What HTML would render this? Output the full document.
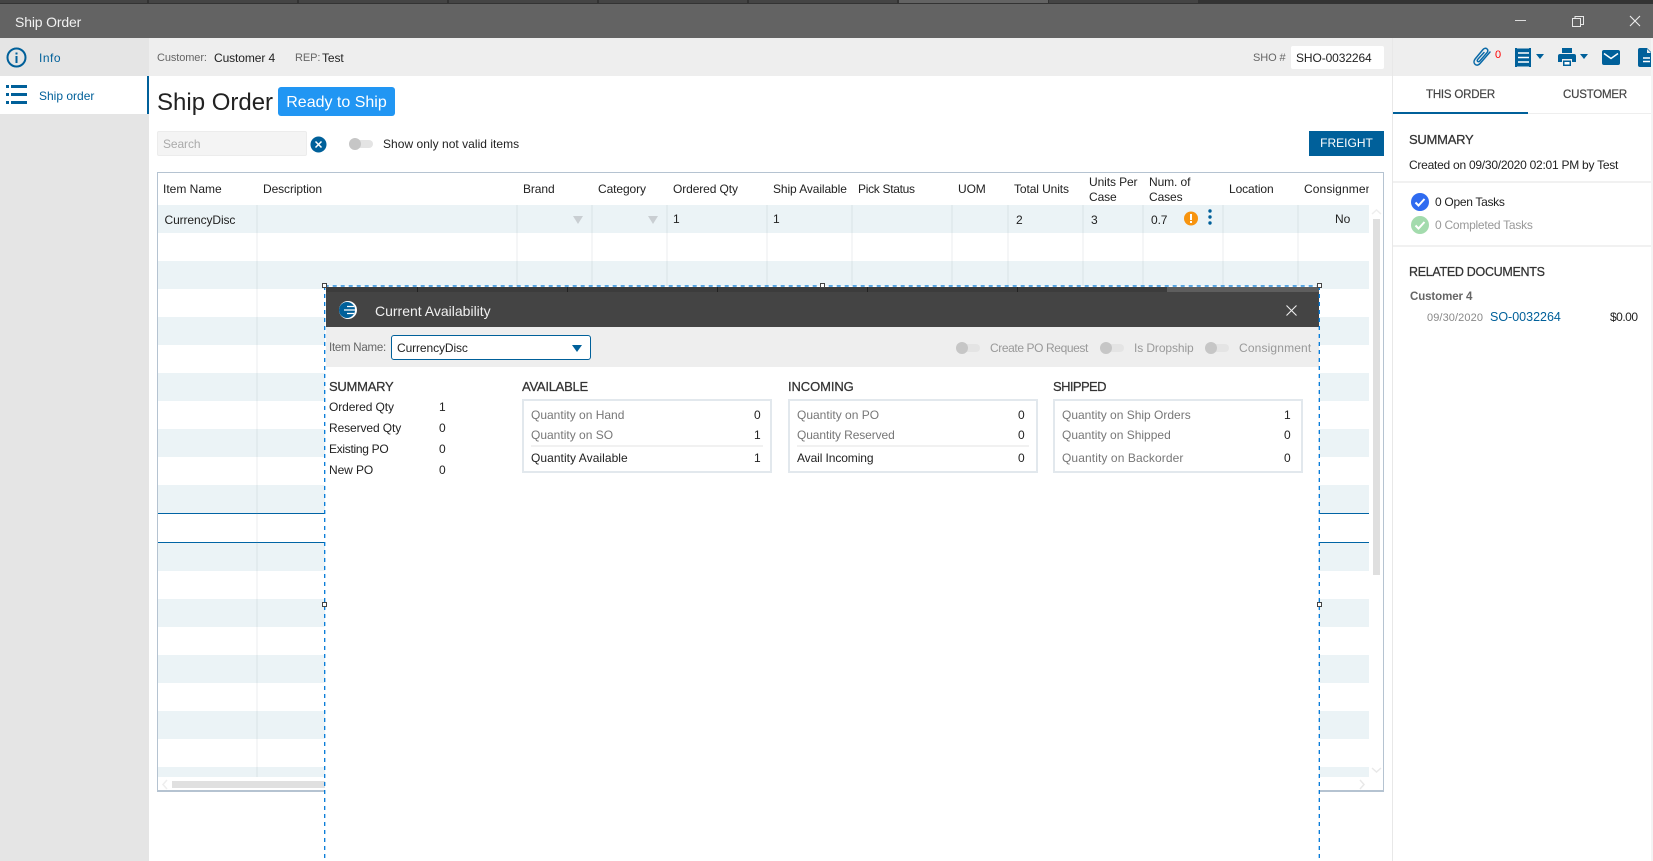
<!DOCTYPE html>
<html lang="en"><head><meta charset="utf-8"><title>Ship Order</title>
<style>
*{box-sizing:border-box}
html,body{margin:0;padding:0;width:1653px;height:861px;overflow:hidden;background:#fff}
body{position:relative;font-family:"Liberation Sans",sans-serif;font-size:12px;color:#222}
.a{position:absolute}
.t{position:absolute;white-space:nowrap;line-height:16px;height:16px;letter-spacing:-.1px}
.g{color:#777;letter-spacing:0}
.sep{position:absolute;top:205px;width:2px;height:572px;background:rgba(130,140,150,.08)}
.tg{position:absolute;width:24px;height:8px;border-radius:4px;background:#e4e4e4}
.tg:before{content:"";position:absolute;left:0;top:-2px;width:12px;height:12px;border-radius:50%;background:#c6c6c6}
.box{position:absolute;top:399px;width:250px;height:74px;border:2px solid #e2e8ed;background:#fff}
.hd{font-size:13px;color:#333;letter-spacing:-.25px;-webkit-text-stroke:.25px #333}
.div{position:absolute;height:2px;background:#f1f1f1}
.h{position:absolute;width:5px;height:5px;border:1px solid #444;background:#fff}
</style></head><body>

<!-- top strip -->
<div class="a" style="left:0;top:0;width:1653px;height:4px;background:#333"></div>
<div class="a" style="left:0;top:0;width:147px;height:3px;background:#444"></div>
<div class="a" style="left:149px;top:0;width:148px;height:3px;background:#444"></div>
<div class="a" style="left:299px;top:0;width:148px;height:3px;background:#444"></div>
<div class="a" style="left:449px;top:0;width:148px;height:3px;background:#444"></div>
<div class="a" style="left:599px;top:0;width:148px;height:3px;background:#444"></div>
<div class="a" style="left:749px;top:0;width:148px;height:3px;background:#444"></div>
<div class="a" style="left:899px;top:0;width:149px;height:3px;background:#636363"></div>
<div class="a" style="left:1049px;top:0;width:149px;height:3px;background:#444"></div>
<!-- title bar -->
<div class="a" style="left:0;top:4px;width:1653px;height:34px;background:#636363"></div>
<div class="t" style="left:15px;top:14px;color:#f2f2f2;font-size:14px;letter-spacing:-.15px">Ship Order</div>
<div class="a" style="left:1515px;top:20px;width:11px;height:1px;background:#ddd"></div>
<svg class="a" style="left:1571px;top:15px" width="14" height="13" viewBox="0 0 14 13" fill="none" stroke="#e8e8e8"><rect x="1.500" y="3.500" width="8" height="8"/><path d="M4 3V1.500h8.500v8H10"/></svg>
<svg class="a" style="left:1629px;top:15px" width="12" height="12" viewBox="0 0 12 12" stroke="#eee" stroke-width="1.100"><path d="M1 1l10 10M11 1L1 11"/></svg>

<!-- sidebar -->
<div class="a" style="left:0;top:38px;width:149px;height:823px;background:#e5e5e5"></div>
<div class="a" style="left:0;top:76px;width:149px;height:38px;background:#fff;border-right:2px solid #00609a"></div>
<svg class="a" style="left:6px;top:47px" width="21" height="21" viewBox="0 0 21 21"><circle cx="10.500" cy="10.500" r="9" fill="none" stroke="#00609a" stroke-width="2"/><rect x="9.500" y="9" width="2" height="7" fill="#00609a"/><rect x="9.500" y="5.500" width="2" height="2" fill="#00609a"/></svg>
<div class="t" style="left:39px;top:50px;color:#00609a;letter-spacing:.5px">Info</div>
<svg class="a" style="left:6px;top:85px" width="21" height="20" viewBox="0 0 21 20" fill="#00609a"><rect x="0" y="0" width="3" height="3"/><rect x="5" y="0" width="16" height="3"/><rect x="0" y="8" width="3" height="3"/><rect x="5" y="8" width="16" height="3"/><rect x="0" y="16" width="3" height="3"/><rect x="5" y="16" width="16" height="3"/></svg>
<div class="t" style="left:39px;top:88px;color:#00609a;letter-spacing:0">Ship order</div>

<!-- header bar -->
<div class="a" style="left:149px;top:38px;width:1504px;height:38px;background:#eee"></div>
<div class="t" style="left:157px;top:50px;font-size:11px;color:#666">Customer:</div>
<div class="t" style="left:214px;top:50px">Customer 4</div>
<div class="t" style="left:295px;top:50px;font-size:11px;color:#666">REP:</div>
<div class="t" style="left:322px;top:50px">Test</div>
<div class="t" style="left:1253px;top:50px;font-size:11px;color:#666">SHO #</div>
<div class="a" style="left:1291px;top:46px;width:93px;height:23px;background:#fff;border-radius:2px"></div>
<div class="t" style="left:1296px;top:50px">SHO-0032264</div>

<!-- title -->
<div class="a" style="left:157px;top:87px;font-size:24px;line-height:32px;white-space:nowrap;color:#222">Ship Order</div>
<div class="a" style="left:278px;top:87px;width:117px;height:29px;background:#2196f3;border-radius:3px;color:#fff;font-size:16px;line-height:31px;text-align:center;white-space:nowrap">Ready to Ship</div>

<!-- search row -->
<div class="a" style="left:157px;top:131px;width:150px;height:25px;background:#f4f4f4;border:1px solid #ececec;border-radius:2px"></div>
<div class="t" style="left:163px;top:136px;color:#aaa">Search</div>
<svg class="a" style="left:310px;top:136px" width="17" height="17" viewBox="0 0 17 17"><circle cx="8.500" cy="8.500" r="8" fill="#00609a"/><path d="M5.500 5.500l6 6M11.500 5.500l-6 6" stroke="#fff" stroke-width="1.500"/></svg>
<div class="tg" style="left:349px;top:140px"></div>
<div class="t" style="left:383px;top:136px;letter-spacing:.03px">Show only not valid items</div>
<div class="a" style="left:1309px;top:131px;width:75px;height:25px;background:#00609a;color:#fff;font-size:12px;line-height:25px;text-align:center">FREIGHT</div>

<!-- table -->
<div class="a" style="left:157px;top:172px;width:1227px;height:620px;border:1px solid #b5c3d1;border-bottom-width:2px"></div>
<div class="a" style="left:158px;top:205px;width:1211px;height:308px;background:repeating-linear-gradient(#ebf3f6 0,#ebf3f6 28px,#fff 28px,#fff 56px)"></div>
<div class="a" style="left:158px;top:543px;width:1211px;height:234px;background:repeating-linear-gradient(#ebf3f6 0,#ebf3f6 28px,#fff 28px,#fff 56px)"></div>
<div class="a" style="left:158px;top:513px;width:1211px;height:1px;background:#0064a5"></div>
<div class="a" style="left:158px;top:542px;width:1211px;height:1px;background:#0064a5"></div>
<div class="sep" style="left:256px"></div><div class="sep" style="left:516px"></div><div class="sep" style="left:591px"></div><div class="sep" style="left:666px"></div><div class="sep" style="left:766px"></div><div class="sep" style="left:851px"></div><div class="sep" style="left:951px"></div><div class="sep" style="left:1007px"></div><div class="sep" style="left:1082px"></div><div class="sep" style="left:1142px"></div><div class="sep" style="left:1222px"></div><div class="sep" style="left:1297px"></div>

<div class="t" style="left:163px;top:181px;letter-spacing:0">Item Name</div>
<div class="t" style="left:263px;top:181px">Description</div>
<div class="t" style="left:523px;top:181px">Brand</div>
<div class="t" style="left:598px;top:181px">Category</div>
<div class="t" style="left:673px;top:181px">Ordered Qty</div>
<div class="t" style="left:773px;top:181px">Ship Available</div>
<div class="t" style="left:858px;top:181px;letter-spacing:-.3px">Pick Status</div>
<div class="t" style="left:958px;top:181px">UOM</div>
<div class="t" style="left:1014px;top:181px">Total Units</div>
<div class="t" style="left:1089px;top:174px">Units Per</div>
<div class="t" style="left:1089px;top:189px">Case</div>
<div class="t" style="left:1149px;top:174px">Num. of</div>
<div class="t" style="left:1149px;top:189px">Cases</div>
<div class="t" style="left:1229px;top:181px">Location</div>
<div class="t" style="left:1304px;top:181px;width:65px;overflow:hidden;letter-spacing:.1px">Consignment</div>

<div class="t" style="left:164.500px;top:212px">CurrencyDisc</div>
<div class="a" style="left:573px;top:216px;border-left:5.500px solid transparent;border-right:5.500px solid transparent;border-top:8px solid #c9ced2"></div>
<div class="a" style="left:648px;top:216px;border-left:5.500px solid transparent;border-right:5.500px solid transparent;border-top:8px solid #c9ced2"></div>
<div class="t" style="left:673px;top:211px">1</div>
<div class="t" style="left:773px;top:211px">1</div>
<div class="t" style="left:1016px;top:212px">2</div>
<div class="t" style="left:1091px;top:212px">3</div>
<div class="t" style="left:1151px;top:212px">0.7</div>
<svg class="a" style="left:1184px;top:211px" width="14" height="15" viewBox="0 0 14 15"><circle cx="7" cy="7.500" r="7" fill="#f7940f"/><rect x="6" y="3" width="2" height="6" fill="#fff"/><rect x="6" y="10" width="2" height="2" fill="#fff"/></svg>
<svg class="a" style="left:1208px;top:209px" width="4" height="16" fill="#00609a"><circle cx="2" cy="2" r="1.700"/><circle cx="2" cy="8" r="1.700"/><circle cx="2" cy="14" r="1.700"/></svg>
<div class="t" style="left:1335px;top:211px">No</div>

<!-- scrollbars -->
<div class="a" style="left:1373px;top:219px;width:7px;height:356px;background:#dfdfdf"></div>
<svg class="a" style="left:1370px;top:208px" width="13" height="8" fill="none" stroke="#eee" stroke-width="1.500"><path d="M2 6l4.500-4 4.500 4"/></svg>
<svg class="a" style="left:1370px;top:766px" width="13" height="8" fill="none" stroke="#e8e8e8" stroke-width="1.500"><path d="M2 2l4.500 4 4.500-4"/></svg>
<div class="a" style="left:172px;top:781px;width:160px;height:7px;background:#e0e0e0"></div>
<svg class="a" style="left:161px;top:778px" width="8" height="13" fill="none" stroke="#eee" stroke-width="1.500"><path d="M6 2L2 6.500 6 11"/></svg>
<svg class="a" style="left:1358px;top:778px" width="8" height="13" fill="none" stroke="#e8e8e8" stroke-width="1.500"><path d="M2 2l4 4.500L2 11"/></svg>

<!-- right panel -->
<div class="a" style="left:1392px;top:38px;width:1px;height:823px;background:#e8e8e8"></div>
<div class="a" style="left:1393px;top:38px;width:260px;height:823px;background:#fff"></div>
<div class="a" style="left:1393px;top:38px;width:260px;height:38px;background:#eee"></div>
<svg class="a" style="left:1472px;top:47px" width="20" height="21" viewBox="0 0 20 21" fill="none" stroke="#0a6aa8" stroke-width="1.500" stroke-linecap="round"><path d="M18 5L8.500 16c-1.600 2.100-3.800 2.700-5.300 1.400S1.500 14 3.100 12L11 2.500c1.100-1.300 2.700-1.600 3.900-.7s1.200 2.600.1 3.900L7.800 14c-.6.800-1.500.9-2.100.4s-.5-1.300.1-2.100L12 5.500"/></svg>
<div class="t" style="left:1495px;top:47px;color:#f00;font-size:11px">0</div>
<svg class="a" style="left:1515px;top:48px" width="17" height="19" viewBox="0 0 17 19" fill="#00609a"><path d="M0 0h2l1 1 1-1 1 1 1-1 1 1 1-1 1 1 1-1 1 1 1-1 1 1 1-1h2v19h-2l-1-1-1 1-1-1-1 1-1-1-1 1-1-1-1 1-1-1-1 1-1-1-1 1H0z"/><path d="M3 5h11M3 9.500h11M3 14h11" stroke="#fff" stroke-width="1.600"/></svg>
<div class="a" style="left:1536px;top:54px;border-left:4px solid transparent;border-right:4px solid transparent;border-top:5px solid #00609a"></div>
<svg class="a" style="left:1558px;top:48px" width="18" height="18" viewBox="0 0 18 18" fill="#00609a"><rect x="4" y="0" width="10" height="5"/><path d="M2 6h14a2 2 0 012 2v6h-4v-3H4v3H0V8a2 2 0 012-2z"/><rect x="5" y="12.500" width="8" height="5.500"/><rect x="6.500" y="14" width="5" height="2.500" fill="#fff"/></svg>
<div class="a" style="left:1580px;top:54px;border-left:4px solid transparent;border-right:4px solid transparent;border-top:5px solid #00609a"></div>
<svg class="a" style="left:1602px;top:50px" width="18" height="15" viewBox="0 0 18 15"><rect width="18" height="15" rx="2" fill="#00609a"/><path d="M2 3.500l7 5 7-5" fill="none" stroke="#fff" stroke-width="1.500"/></svg>
<svg class="a" style="left:1638px;top:48px" width="15" height="19" viewBox="0 0 15 19"><path d="M2 0h7l5 5v14H2a2 2 0 01-2-2V2a2 2 0 012-2z" fill="#00609a"/><path d="M5 10h7M5 13.500h7" stroke="#fff" stroke-width="1.500"/><path d="M9 1v4h4" fill="#eee"/></svg>
<div class="a" style="left:1651px;top:38px;width:2px;height:823px;background:#f4f4f4"></div>

<div class="t" style="left:1426px;top:87px;color:#444;font-size:11.500px;letter-spacing:-.2px;-webkit-text-stroke:.2px #444">THIS ORDER</div>
<div class="t" style="left:1563px;top:87px;color:#444;font-size:11.500px;letter-spacing:-.2px;-webkit-text-stroke:.2px #444">CUSTOMER</div>
<div class="a" style="left:1393px;top:113px;width:258px;height:1px;background:#eee"></div>
<div class="a" style="left:1393px;top:112px;width:135px;height:2px;background:#00609a"></div>
<div class="t hd" style="left:1409px;top:132px">SUMMARY</div>
<div class="t" style="left:1409px;top:157px;letter-spacing:-.25px">Created on 09/30/2020 02:01 PM by Test</div>
<div class="div" style="left:1393px;top:181px;width:258px"></div>
<svg class="a" style="left:1411px;top:193px" width="18" height="18" viewBox="0 0 18 18"><circle cx="9" cy="9" r="9" fill="#2f6bf0"/><path d="M4.500 9.500l3 3 6-6.500" fill="none" stroke="#fff" stroke-width="2"/></svg>
<div class="t" style="left:1435px;top:194px;letter-spacing:-.3px">0 Open Tasks</div>
<svg class="a" style="left:1411px;top:216px" width="18" height="18" viewBox="0 0 18 18"><circle cx="9" cy="9" r="9" fill="#a3dbad"/><path d="M4.500 9.500l3 3 6-6.500" fill="none" stroke="#fff" stroke-width="2"/></svg>
<div class="t" style="left:1435px;top:217px;color:#999;letter-spacing:-.25px">0 Completed Tasks</div>
<div class="div" style="left:1393px;top:245px;width:258px"></div>
<div class="t hd" style="left:1409px;top:264px;font-size:12.500px;letter-spacing:-.3px">RELATED DOCUMENTS</div>
<div class="t" style="left:1410px;top:289px;color:#666;font-weight:bold;font-size:11.500px;letter-spacing:-.1px">Customer 4</div>
<div class="t" style="left:1427px;top:310px;color:#888;font-size:11px;letter-spacing:.1px">09/30/2020</div>
<div class="t" style="left:1490px;top:309px;color:#00609a;font-size:12.500px;letter-spacing:0">SO-0032264</div>
<div class="t" style="left:1610px;top:309px;letter-spacing:-.5px">$0.00</div>

<!-- modal -->
<div class="a" style="left:325px;top:286px;width:994px;height:600px;background:#fff"></div>
<div class="a" style="left:326px;top:287px;width:993px;height:5px;background:#3c3c3c"></div>
<div class="a" style="left:1167px;top:287px;width:152px;height:5px;background:#5e5e5e"></div>
<div class="a" style="left:417px;top:287px;width:1px;height:5px;background:#222"></div>
<div class="a" style="left:567px;top:287px;width:1px;height:5px;background:#222"></div>
<div class="a" style="left:717px;top:287px;width:1px;height:5px;background:#222"></div>
<div class="a" style="left:867px;top:287px;width:1px;height:5px;background:#222"></div>
<div class="a" style="left:1017px;top:287px;width:1px;height:5px;background:#222"></div>
<div class="a" style="left:326px;top:292px;width:993px;height:35px;background:#444"></div>
<svg class="a" style="left:339px;top:301px" width="18" height="18" viewBox="0 0 18 18"><circle cx="9" cy="9" r="9" fill="#fff"/><circle cx="8" cy="9" r="8" fill="#00609a"/><path d="M8 5.500h7M5 9h11M8 12.500h7" stroke="#fff" stroke-width="1.200"/></svg>
<div class="t" style="left:375px;top:303px;color:#f0f0f0;font-size:14px;letter-spacing:0">Current Availability</div>
<svg class="a" style="left:1286px;top:305px" width="11" height="11" viewBox="0 0 11 11" stroke="#eee" stroke-width="1.100"><path d="M.5.500l10 10M10.500.500l-10 10"/></svg>

<div class="a" style="left:326px;top:327px;width:993px;height:40px;background:#eee"></div>
<div class="t" style="left:329px;top:340px;color:#666;font-size:11.500px;letter-spacing:-.25px">Item Name:</div>
<div class="a" style="left:391px;top:335px;width:200px;height:25px;background:#fff;border:1px solid #00609a;border-radius:3px"></div>
<div class="t" style="left:397px;top:340px">CurrencyDisc</div>
<div class="a" style="left:572px;top:345px;border-left:5px solid transparent;border-right:5px solid transparent;border-top:7px solid #00609a"></div>
<div class="tg" style="left:956px;top:344px"></div>
<div class="t" style="left:990px;top:340px;color:#999;letter-spacing:-.4px">Create PO Request</div>
<div class="tg" style="left:1100px;top:344px"></div>
<div class="t" style="left:1134px;top:340px;color:#999">Is Dropship</div>
<div class="tg" style="left:1205px;top:344px"></div>
<div class="t" style="left:1239px;top:340px;color:#999;letter-spacing:.15px">Consignment</div>

<div class="t hd" style="left:329px;top:379px">SUMMARY</div>
<div class="t" style="left:329px;top:399px">Ordered Qty</div><div class="t" style="left:439px;top:399px">1</div>
<div class="t" style="left:329px;top:420px">Reserved Qty</div><div class="t" style="left:439px;top:420px">0</div>
<div class="t" style="left:329px;top:441px;letter-spacing:-.3px">Existing PO</div><div class="t" style="left:439px;top:441px">0</div>
<div class="t" style="left:329px;top:462px">New PO</div><div class="t" style="left:439px;top:462px">0</div>

<div class="t hd" style="left:522px;top:379px">AVAILABLE</div>
<div class="box" style="left:522px"></div>
<div class="t g" style="left:531px;top:407px">Quantity on Hand</div><div class="t" style="left:754px;top:407px">0</div>
<div class="t g" style="left:531px;top:427px">Quantity on SO</div><div class="t" style="left:754px;top:427px">1</div>
<div class="div" style="left:531px;top:445px;width:232px"></div>
<div class="t" style="left:531px;top:450px;letter-spacing:.05px">Quantity Available</div><div class="t" style="left:754px;top:450px">1</div>

<div class="t hd" style="left:788px;top:379px;letter-spacing:-.1px">INCOMING</div>
<div class="box" style="left:788px"></div>
<div class="t g" style="left:797px;top:407px">Quantity on PO</div><div class="t" style="left:1018px;top:407px">0</div>
<div class="t g" style="left:797px;top:427px;letter-spacing:-.1px">Quantity Reserved</div><div class="t" style="left:1018px;top:427px">0</div>
<div class="div" style="left:797px;top:445px;width:232px"></div>
<div class="t" style="left:797px;top:450px">Avail Incoming</div><div class="t" style="left:1018px;top:450px">0</div>

<div class="t hd" style="left:1053px;top:379px;letter-spacing:-.6px">SHIPPED</div>
<div class="box" style="left:1053px"></div>
<div class="t g" style="left:1062px;top:407px">Quantity on Ship Orders</div><div class="t" style="left:1284px;top:407px">1</div>
<div class="t g" style="left:1062px;top:427px">Quantity on Shipped</div><div class="t" style="left:1284px;top:427px">0</div>
<div class="t g" style="left:1062px;top:450px;letter-spacing:.1px">Quantity on Backorder</div><div class="t" style="left:1284px;top:450px">0</div>

<!-- selection frame -->
<svg class="a" style="left:0;top:0;pointer-events:none" width="1653" height="861" fill="none" stroke="#0078d7" stroke-width="1.300" stroke-dasharray="4 4"><path d="M324.700 286H1319.300"/><path d="M324.700 286V861"/><path d="M1319.300 286V861"/></svg>
<div class="h" style="left:322px;top:283px"></div>
<div class="h" style="left:820px;top:283px"></div>
<div class="h" style="left:1317px;top:283px"></div>
<div class="h" style="left:322px;top:602px"></div>
<div class="h" style="left:1317px;top:602px"></div>
</body></html>
